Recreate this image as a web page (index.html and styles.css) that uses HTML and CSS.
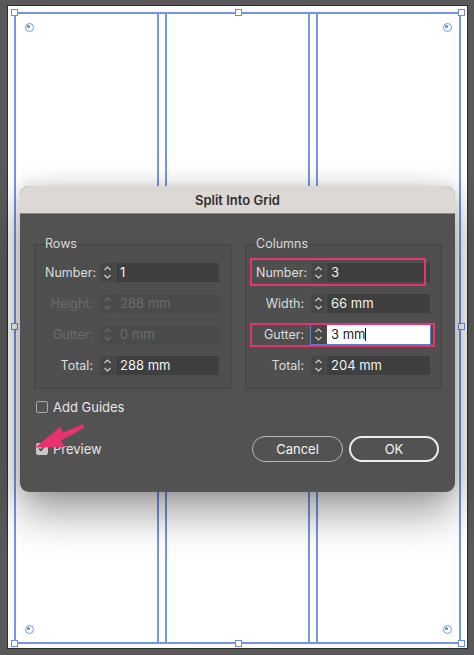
FILE: index.html
```html
<!DOCTYPE html>
<html lang="en">
<head>
  <meta charset="UTF-8" />
  <meta name="viewport" content="width=device-width, initial-scale=1" />
  <title>Split Into Grid</title>
  <link rel="stylesheet" href="styles.css">
</head>
<body>

<div class="page">
  <div class="frame">
    <div class="col"></div>
    <div class="col"></div>
    <div class="col"></div>
  </div>

  <span class="handle h-tl"></span>
  <span class="handle h-tm"></span>
  <span class="handle h-tr"></span>
  <span class="handle h-ml"></span>
  <span class="handle h-mr"></span>
  <span class="handle h-bl"></span>
  <span class="handle h-bm"></span>
  <span class="handle h-br"></span>

  <span class="refpoint r-tl"></span>
  <span class="refpoint r-tr"></span>
  <span class="refpoint r-bl"></span>
  <span class="refpoint r-br"></span>

  <div class="dialog">
    <div class="titlebar">Split Into Grid</div>

    <div class="dialog-body">
      <div class="groups">
        <fieldset class="group">
          <legend>Rows</legend>
          <div class="row">
            <label>Number:</label>
            <span class="spinner"><svg viewBox="0 0 15 19"><path d="M4.5 7 L7.5 4 L10.5 7 M4.5 12 L7.5 15 L10.5 12"/></svg></span>
            <span class="field">1</span>
          </div>
          <div class="row disabled">
            <label>Height:</label>
            <span class="spinner"><svg viewBox="0 0 15 19"><path d="M4.5 7 L7.5 4 L10.5 7 M4.5 12 L7.5 15 L10.5 12"/></svg></span>
            <span class="field">288 mm</span>
          </div>
          <div class="row disabled">
            <label>Gutter:</label>
            <span class="spinner"><svg viewBox="0 0 15 19"><path d="M4.5 7 L7.5 4 L10.5 7 M4.5 12 L7.5 15 L10.5 12"/></svg></span>
            <span class="field">0 mm</span>
          </div>
          <div class="row">
            <label>Total:</label>
            <span class="spinner"><svg viewBox="0 0 15 19"><path d="M4.5 7 L7.5 4 L10.5 7 M4.5 12 L7.5 15 L10.5 12"/></svg></span>
            <span class="field">288 mm</span>
          </div>
        </fieldset>

        <fieldset class="group">
          <legend>Columns</legend>
          <div class="row marked mark-number">
            <label>Number:</label>
            <span class="spinner"><svg viewBox="0 0 15 19"><path d="M4.5 7 L7.5 4 L10.5 7 M4.5 12 L7.5 15 L10.5 12"/></svg></span>
            <span class="field">3</span>
          </div>
          <div class="row">
            <label>Width:</label>
            <span class="spinner"><svg viewBox="0 0 15 19"><path d="M4.5 7 L7.5 4 L10.5 7 M4.5 12 L7.5 15 L10.5 12"/></svg></span>
            <span class="field">66 mm</span>
          </div>
          <div class="row marked mark-gutter">
            <label>Gutter:</label>
            <span class="focus">
              <span class="spinner"><svg viewBox="0 0 15 19"><path d="M4.5 7 L7.5 4 L10.5 7 M4.5 12 L7.5 15 L10.5 12"/></svg></span>
              <span class="field active">3 mm<i class="caret"></i></span>
            </span>
          </div>
          <div class="row">
            <label>Total:</label>
            <span class="spinner"><svg viewBox="0 0 15 19"><path d="M4.5 7 L7.5 4 L10.5 7 M4.5 12 L7.5 15 L10.5 12"/></svg></span>
            <span class="field">204 mm</span>
          </div>
        </fieldset>
      </div>

      <div class="check">
        <span class="box"></span>
        <span>Add Guides</span>
      </div>

      <div class="footer">
        <div class="check">
          <span class="box checked"><svg viewBox="0 0 12 12"><path d="M3 6.2 L5.2 8.4 L9.2 3.6"/></svg></span>
          <span>Preview</span>
        </div>
        <div class="buttons">
          <button class="btn">Cancel</button>
          <button class="btn primary">OK</button>
        </div>
      </div>
    </div>

    <svg class="arrow" viewBox="0 0 435 306">
      <path d="M63 238 Q52 243 43 246.5 L40 241 L15 261.5 L45 261 L41 254.5 Q52 249 64.5 241.5 Z"/>
    </svg>
  </div>
</div>

</body>
</html>
```

FILE: styles.css
```css
* {
  margin: 0;
  padding: 0;
  box-sizing: border-box;
}

body {
  background: #595959;
  font-family: Inter, 'Noto Sans', sans-serif;
  padding: 6px 0 0 8px;
  height: 655px;
  overflow: hidden;
}

.page {
  position: relative;
  width: 459px;
  height: 642px;
  background: #fff;
  box-shadow: 0 0 0 1px #2e2e2e;
  padding: 6px 0 0 6px;
}

.frame {
  display: grid;
  grid-template-columns: repeat(3, 145px);
  gap: 6px;
  height: 632px;
  border-top: 2px solid #7396ea;
  border-bottom: 2px solid #7396ea;
  width: 447px;
}

.col {
  border-left: 2px solid #7396ea;
  border-right: 2px solid #7396ea;
}

/* selection handles */
.handle {
  position: absolute;
  width: 7px;
  height: 7px;
  background: #fff;
  border: 1px solid #6a8ee6;
}

.h-tl { left: 3px; top: 3px; }
.h-tm { left: 227px; top: 3px; }
.h-tr { left: 450px; top: 3px; }
.h-ml { left: 3px; top: 317px; }
.h-mr { left: 450px; top: 317px; }
.h-bl { left: 3px; top: 634px; }
.h-bm { left: 227px; top: 634px; }
.h-br { left: 450px; top: 634px; }

.refpoint {
  position: absolute;
  width: 9px;
  height: 9px;
  border: 1.5px solid #7396ea;
  border-radius: 50%;
}

.refpoint::after {
  content: "";
  position: absolute;
  left: 1.5px;
  top: 1.5px;
  width: 3px;
  height: 3px;
  border-radius: 50%;
  background: #5d82de;
}

.r-tl { left: 16.5px; top: 16.5px; }
.r-tr { left: 434.5px; top: 16.5px; }
.r-bl { left: 16.5px; top: 618.5px; }
.r-br { left: 434.5px; top: 618.5px; }

/* dialog */
.dialog {
  position: absolute;
  left: 12px;
  top: 180px;
  width: 435px;
  height: 306px;
  background: #525252;
  border-radius: 9px;
  box-shadow: 0 20px 44px rgba(0,0,0,0.4), 0 0 16px rgba(0,0,0,0.12);
}

.titlebar {
  height: 28px;
  background: #dcd8d3;
  border-radius: 9px 9px 0 0;
  border-bottom: 1px solid #8d8a86;
  text-align: center;
  font-size: 13px;
  font-weight: 600;
  color: #2f2f2f;
  line-height: 28px;
}

.dialog-body {
  padding: 23px 14px 0 14px;
}

.groups {
  display: grid;
  grid-template-columns: 197px 197px;
  gap: 14px;
}

.group {
  border: 1px solid rgba(0,0,0,0.16);
  background: rgba(0,0,0,0.03);
  padding: 12px 11px 13px 10px;
  display: flex;
  flex-direction: column;
  gap: 12px;
}

.group legend {
  font-size: 12.5px;
  line-height: 14px;
  color: #d8d8d8;
  padding: 0;
}

.row {
  display: flex;
  align-items: center;
  height: 19px;
  position: relative;
}

.row label {
  width: 48px;
  text-align: right;
  font-size: 12.5px;
  color: #dcdcdc;
  margin-right: 7px;
  white-space: nowrap;
}

.spinner {
  width: 15px;
  height: 19px;
  background: #474747;
  margin-right: 1px;
  display: block;
}

.spinner svg {
  width: 15px;
  height: 19px;
  display: block;
  fill: none;
  stroke: #d2d2d2;
  stroke-width: 1.1;
}

.field {
  flex: 1;
  height: 19px;
  background: #3f3f3f;
  color: #f2f2f2;
  font-size: 13px;
  line-height: 19px;
  padding-left: 4px;
}

.row.disabled label,
.row.disabled .field {
  color: #6c6c6c;
}

.row.disabled .field,
.row.disabled .spinner {
  background: #4b4b4b;
}

.row.disabled .spinner svg {
  stroke: #6c6c6c;
}

.focus {
  flex: 1;
  display: flex;
  outline: 1.5px solid #5b82c4;
}

.field.active {
  background: #fff;
  color: #222;
}

.caret {
  display: inline-block;
  width: 1px;
  height: 13px;
  background: #111;
  vertical-align: -2px;
}

/* annotation boxes */
.marked::after {
  content: "";
  position: absolute;
  border: 2.5px solid #e5346f;
}

.mark-number::after { left: -6px; right: 4px; top: -5px; bottom: -4px; }
.mark-gutter::after { left: -6px; right: -5px; top: -2px; bottom: -3px; }

.check {
  display: flex;
  align-items: center;
  gap: 5px;
  margin-left: 2px;
  font-size: 13px;
  color: #e6e6e6;
  height: 18px;
  margin-top: 9px;
}

.box {
  width: 12px;
  height: 12px;
  border: 1.5px solid #a9a9a9;
  border-radius: 2px;
}

.box.checked {
  background: #c9c9c9;
  border-color: #c9c9c9;
  display: flex;
}

.box svg {
  width: 9px;
  height: 9px;
  fill: none;
  stroke: #444;
  stroke-width: 2;
}

.footer {
  display: flex;
  justify-content: space-between;
  align-items: center;
  margin-top: 20px;
  height: 26px;
}

.footer .check {
  margin-top: 0;
}

.buttons {
  display: flex;
  gap: 6px;
  margin-right: 2px;
}

.btn {
  width: 91px;
  height: 26px;
  border-radius: 13px;
  border: 1.5px solid #b8b8b8;
  background: transparent;
  color: #f4f4f4;
  font-family: Inter, 'Noto Sans', sans-serif;
  font-size: 13px;
}

.btn.primary {
  width: 90px;
  border: 2px solid #ececec;
}

.arrow {
  position: absolute;
  left: 0;
  top: 0;
  width: 435px;
  height: 306px;
  fill: #e8336f;
  pointer-events: none;
}
```
